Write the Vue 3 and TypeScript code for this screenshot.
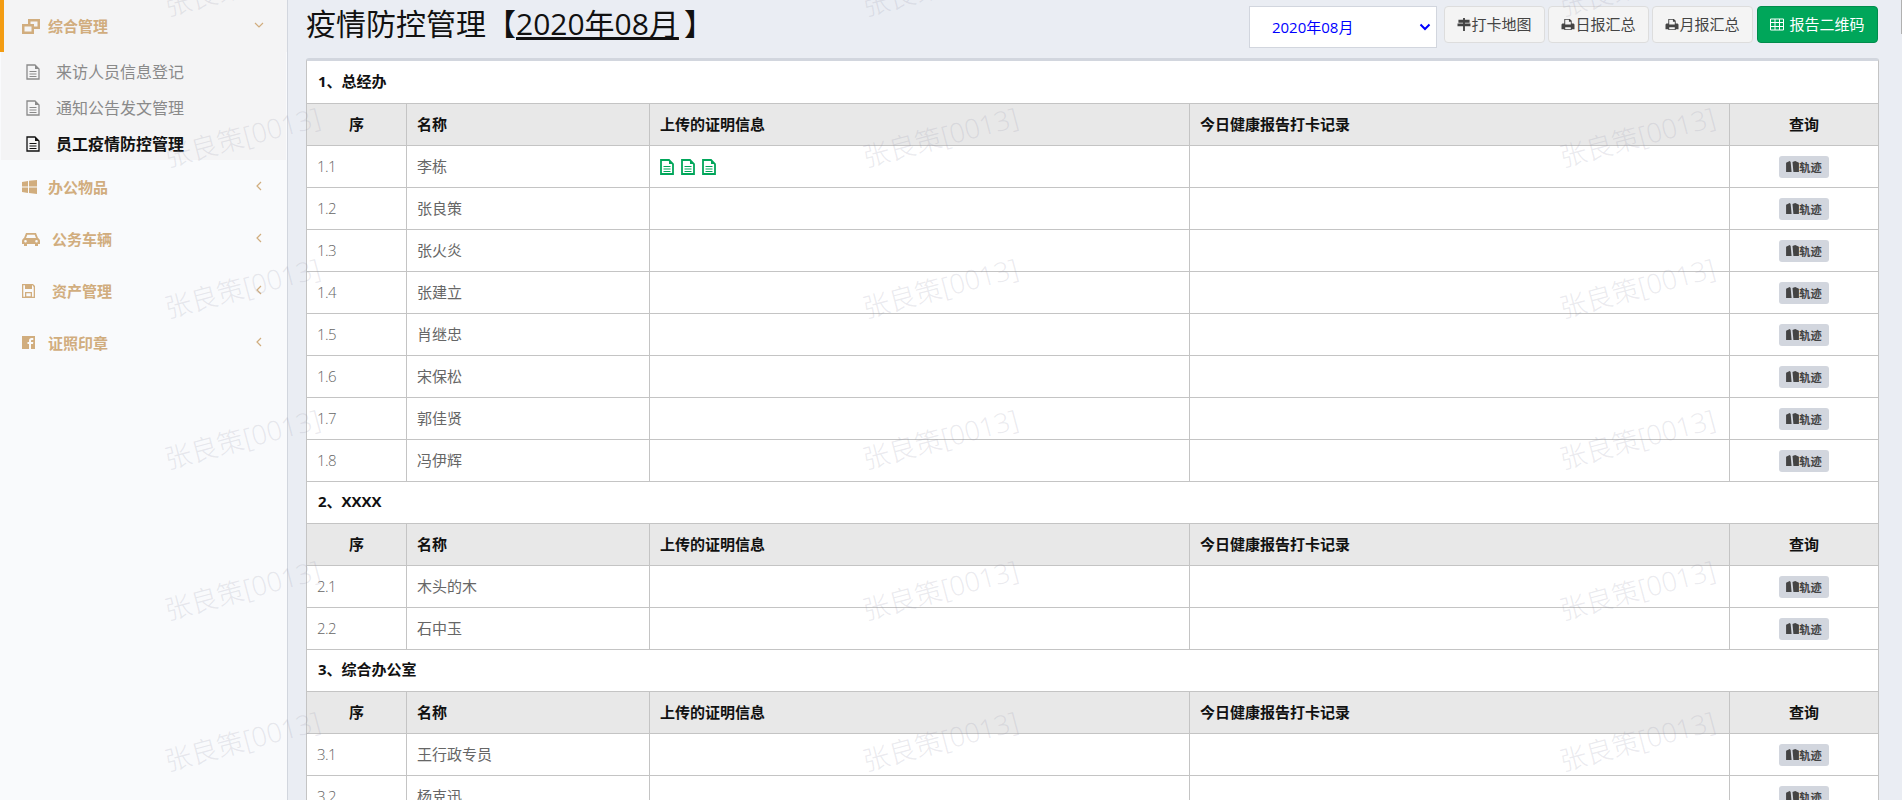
<script setup lang="ts">
interface Person { no: string; name: string; files?: number }
interface Section { title: string; people: Person[] }
const sections: Section[] = [
  { title: '1、总经办', people: [
    { no: '1.1', name: '李栋', files: 3 }, { no: '1.2', name: '张良策' }, { no: '1.3', name: '张火炎' },
    { no: '1.4', name: '张建立' }, { no: '1.5', name: '肖继忠' }, { no: '1.6', name: '宋保松' },
    { no: '1.7', name: '郭佳贤' }, { no: '1.8', name: '冯伊辉' } ] },
  { title: '2、XXXX', people: [ { no: '2.1', name: '木头的木' }, { no: '2.2', name: '石中玉' } ] },
  { title: '3、综合办公室', people: [ { no: '3.1', name: '王行政专员' }, { no: '3.2', name: '杨克迅' } ] },
]
const subs = ['来访人员信息登记', '通知公告发文管理', '员工疫情防控管理']
const menus = [
  { label: '办公物品', icon: 'win', wide: false },
  { label: '公务车辆', icon: 'car', wide: true },
  { label: '资产管理', icon: 'save', wide: true },
  { label: '证照印章', icon: 'fb', wide: false },
]
const marks: { x: number; y: number }[] = []
for (const x of [162, 860, 1557]) for (const y of [-35, 116, 267, 418, 569, 720]) marks.push({ x, y })
</script>

<template>
  <div class="page">
    <aside class="side">
      <div class="menu open">
        <svg class="mi" viewBox="0 0 18 15" preserveAspectRatio="xMinYMid"><path fill="currentColor" d="M6 0h12v10h-6v5H0V5h6zm2.500 2.500V5H12v2.500h3.500v-5zM2.500 7.500v5h7v-5z"/></svg>
        <span class="ml">综合管理</span>
        <svg class="chev" viewBox="0 0 10 10"><path d="M1 3l4 4 4-4" fill="none" stroke="currentColor" stroke-width="1.2"/></svg>
      </div>
      <div class="subs">
        <div v-for="(s, i) in subs" :key="s" class="sub" :class="{ cur: i === 2 }">
          <svg class="doc" viewBox="0 0 14 16"><path fill="none" stroke="currentColor" stroke-width="1.300" d="M1 1h8l4 4v10H1z"/><path fill="currentColor" d="M9 1v4h4z"/><path stroke="currentColor" d="M3.500 7.500h7M3.500 10h7M3.500 12.500h7"/></svg>
          <span>{{ s }}</span>
        </div>
      </div>
      <div v-for="m in menus" :key="m.label" class="menu">
        <svg v-if="m.icon === 'win'" class="mi" viewBox="0 0 15 14" preserveAspectRatio="xMinYMid"><path fill="currentColor" d="M0 2l6-1v5.500H0zM7 .8 15 0v6.500H7zM0 7.500h6V13l-6-1zM7 7.500h8V14l-8-1z"/></svg>
        <svg v-else-if="m.icon === 'car'" class="mi" viewBox="0 0 18 14" preserveAspectRatio="xMinYMid"><path fill="currentColor" d="M4 1h10l2 5c1 .5 2 1.500 2 3v3h-2v2h-3v-2H5v2H2v-2H0V9c0-1.500 1-2.500 2-3zm1.300 1.800L4 6h10l-1.300-3.200zM3.500 8a1.300 1.300 0 100 2.600 1.300 1.300 0 000-2.600zm11 0a1.300 1.300 0 100 2.600 1.300 1.300 0 000-2.600z"/></svg>
        <svg v-else-if="m.icon === 'save'" class="mi" viewBox="0 0 18 14" preserveAspectRatio="xMinYMid"><path fill="currentColor" d="M0 0h11l2 2v12H0zm1.300 1.300v11.400h10.400V3L10.500 1.300H10V5H3V1.300zM3 8h7v4.700H3zm1.300 1.200v3h4.400v-3z"/></svg>
        <svg v-else class="mi" viewBox="0 0 18 14" preserveAspectRatio="xMinYMid"><path fill="currentColor" d="M0 0h13v13H9V8h2l.3-2H9V5c0-.7.3-1 1-1h1.300V2H9.500C8 2 7 3 7 4.600V6H5.500v2H7v5H0z"/></svg>
        <span class="ml" :class="{ wide: m.wide }">{{ m.label }}</span>
        <svg class="chev" viewBox="0 0 10 10"><path d="M7 1L3 5l4 4" fill="none" stroke="currentColor" stroke-width="1.2"/></svg>
      </div>
    </aside>

    <main class="main">
      <header class="head">
        <h1>疫情防控管理【<u>2020年08月</u><span class="rb">】</span></h1>
        <div class="tools">
          <div class="select"><span>2020年08月</span>
            <svg viewBox="0 0 12 8"><path d="M1.500 1.500 6 6l4.500-4.500" fill="none" stroke="currentColor" stroke-width="2"/></svg>
          </div>
          <button class="btn"><svg viewBox="0 0 14 14"><path fill="currentColor" d="M6 0h2v2h5v3H8v1h6v3H8v5H6V9H0V6h6V5H1V2h5z"/></svg><span>打卡地图</span></button>
          <button class="btn"><svg viewBox="0 0 14 14"><path fill="currentColor" d="M3 1h6l2 2v3h2l1 1v5h-3v1H3v-1H0V7l1-1h2zm1 1v5h6V4H8V2zM4 10v2h6v-2z"/></svg><span>日报汇总</span></button>
          <button class="btn"><svg viewBox="0 0 14 14"><path fill="currentColor" d="M3 1h6l2 2v3h2l1 1v5h-3v1H3v-1H0V7l1-1h2zm1 1v5h6V4H8V2zM4 10v2h6v-2z"/></svg><span>月报汇总</span></button>
          <button class="btn green"><svg viewBox="0 0 14 12"><path fill="none" stroke="currentColor" d="M.5.500h13v11H.5zM.5 4h13M.5 8h13M5 .500v11M9.500 .500v11"/></svg><span>报告二维码</span></button>
        </div>
      </header>

      <section class="card">
        <template v-for="sec in sections" :key="sec.title">
          <div class="title">{{ sec.title }}</div>
          <div class="row th">
            <div class="c no">序</div><div class="c">名称</div><div class="c">上传的证明信息</div>
            <div class="c">今日健康报告打卡记录</div><div class="c act">查询</div>
          </div>
          <div v-for="p in sec.people" :key="p.no" class="row">
            <div class="c num">{{ p.no }}</div>
            <div class="c name">{{ p.name }}</div>
            <div class="c files">
              <svg v-for="n in p.files || 0" :key="n" viewBox="0 0 14 16"><path fill="none" stroke="currentColor" stroke-width="1.800" d="M1 1h8l4 4v10H1z"/><path fill="currentColor" d="M9 1v4h4z"/><path stroke="currentColor" stroke-width="1.200" d="M3.500 7.500h7M3.500 10h7M3.500 12.500h7"/></svg>
            </div>
            <div class="c"></div>
            <div class="c act"><span class="tag"><svg viewBox="0 0 14 12"><path fill="currentColor" d="M0 2l4-2 1 1 1 11H0zM7 1l3-1 4 2v10H8z"/></svg>轨迹</span></div>
          </div>
        </template>
      </section>
    </main>

    <div class="marks">
      <span v-for="(m, i) in marks" :key="i" class="mark" :style="{ left: m.x + 'px', top: m.y + 'px' }">张良策[0013]</span>
    </div>
    <div class="thumb"></div>
  </div>
</template>

<style>
html, body { margin: 0; height: 100%; overflow: hidden; }
</style>

<style scoped>
.page { position: relative; display: flex; width: 1902px; height: 800px; overflow: hidden; background: #eaedf3; font-family: "Open Sans", "Noto Sans CJK SC", sans-serif; font-size: 15px; color: #333; }
.side { width: 288px; box-sizing: border-box; flex: none; height: 800px; background: #f9fafc; border-right: 1px solid #d2d6de; }
.menu { display: flex; align-items: center; height: 52px; padding-left: 22px; color: #d1ad7e; font-weight: 700; font-size: 15px; }
.menu.open { background: #f4f4f5; border-left: 4px solid #f39c12; padding-left: 18px; }
.mi { width: 18px; height: 14px; flex: none; }
.open .mi { height: 15px; }
.ml { margin: 0 0 2px 8px; }
.ml.wide { margin-left: 12px; }
.chev { width: 10px; height: 10px; margin-left: auto; margin-right: 23px; margin-bottom: 2px; }
.subs { box-sizing: border-box; background: #f4f4f5; width: 285px; margin-left: 1px; height: 108px; padding-top: 2px; margin-bottom: 1px; }
.sub { display: flex; align-items: center; height: 36px; padding-left: 25px; color: #8a8a8a; font-size: 16px; }
.sub span { margin-bottom: 2px; }
.sub.cur { color: #111; font-weight: 700; }
.doc { width: 14px; height: 16px; margin-right: 16px; flex: none; }
.main { flex: 1; padding: 0 23px 0 18px; min-width: 0; }
.head { display: flex; justify-content: space-between; align-items: flex-start; height: 58px; }
h1 { margin: 0; font-size: 30px; font-weight: 400; color: #111; line-height: 48px; white-space: nowrap; }
.rb { margin-left: 5px; }
.tools { display: flex; align-items: flex-start; gap: 3px; padding: 6px 1px 0 0; }
.select { display: flex; align-items: center; justify-content: space-between; box-sizing: border-box; width: 188px; height: 42px; padding: 0 5px 0 22px; background: #fff; border: 1px solid #d2d6de; color: #00f; font-size: 15px; margin-right: 4px; }
.select span { margin-bottom: 2px; }
.select svg { width: 12px; height: 8px; }
.btn { display: inline-flex; align-items: center; justify-content: center; box-sizing: border-box; height: 37px; padding: 0 12.5px; border: 1px solid #ddd; border-radius: 4px; background: #f4f4f4; color: #444; font: inherit; font-size: 15px; }
.btn span { margin-bottom: 2px; }
.btn svg { width: 14px; height: 13px; }
.green { width: 121px; padding: 0; background: #00a65a; border-color: #008d4c; color: #fff; margin-left: 1px; }
.green svg { margin-right: 5px; }
.card { background: #fff; border-top: 3px solid #d2d6de; border-left: 1px solid #c4c4c4; border-right: 1px solid #c4c4c4; border-radius: 3px 3px 0 0; padding-top: 1px; }
.title { box-sizing: border-box; height: 42px; line-height: 39px; padding-left: 11px; font-weight: 700; color: #111; font-size: 15px; border-bottom: 1px solid #c4c4c4; }
.row { display: grid; grid-template-columns: 100px 243px 540px 540px 1fr; height: 42px; box-sizing: border-box; border-bottom: 1px solid #c4c4c4; }
.c { display: flex; align-items: center; padding: 0 0 2px 10px; border-right: 1px solid #c4c4c4; box-sizing: border-box; color: #666; }
.c:last-child { border-right: 0; }
.th { background: #e8e8e8; }
.th .c { color: #111; font-weight: 700; }
.no, .act { justify-content: center; padding-left: 0; }
.num { color: #666; font-weight: 300; letter-spacing: -.6px; }
.files { gap: 7px; color: #00a65a; }
.files svg { width: 14px; height: 16px; margin-top: 2px; }
.tag { display: inline-flex; align-items: center; height: 22px; margin-top: 2px; padding: 0 7px; border-radius: 3px; background: #d2d6de; color: #444; font-size: 11.25px; font-weight: 700; }
.tag svg { width: 13px; height: 11px; }
.marks { position: absolute; inset: 0; pointer-events: none; }
.mark { position: absolute; font-size: 27px; font-weight: 300; color: rgba(150,150,170,.2); transform: rotate(-15deg); white-space: nowrap; }
.thumb { position: absolute; right: 0; top: 0; width: 1px; height: 34px; background: #b0b0b0; }
</style>
